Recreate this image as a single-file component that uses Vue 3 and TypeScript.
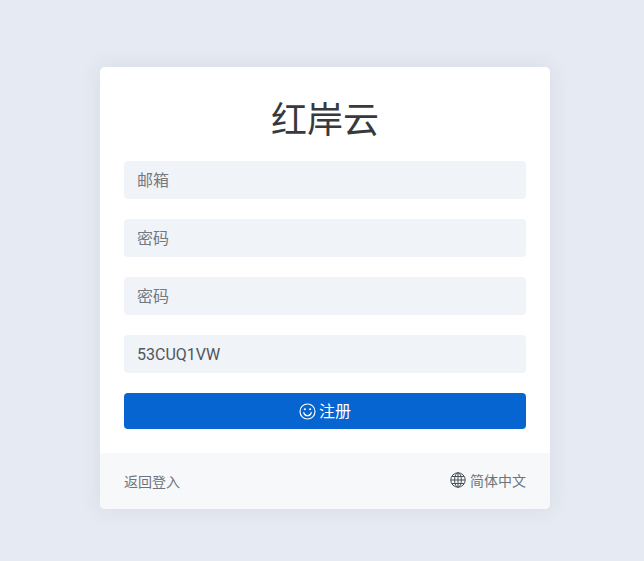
<script setup lang="ts">
const fields: { type: string; placeholder: string; value: string }[] = [
  { type: 'email', placeholder: '邮箱', value: '' },
  { type: 'password', placeholder: '密码', value: '' },
  { type: 'password', placeholder: '密码', value: '' },
  { type: 'text', placeholder: '邀请码', value: '53CUQ1VW' },
]
</script>

<template>
  <main class="page">
    <section class="card">
      <form class="body" @submit.prevent>
        <h1 class="title">红岸云</h1>
        <input
          v-for="(f, i) in fields"
          :key="i"
          class="field"
          :type="f.type"
          :placeholder="f.placeholder"
          :value="f.value"
        />
        <button class="submit" type="submit">
          <svg class="smile" viewBox="0 0 24 24" fill="none" stroke="currentColor" stroke-width="1.6" stroke-linecap="round" aria-hidden="true">
            <circle cx="12" cy="12" r="10.6" />
            <path d="M6.6 13.4c.8 3 3 4.600 5.400 4.600s4.600-1.600 5.400-4.600" />
            <circle cx="8.300" cy="8.800" r="1.500" fill="currentColor" stroke="none" />
            <circle cx="15.700" cy="8.800" r="1.500" fill="currentColor" stroke="none" />
          </svg>
          <span class="submit-label">注册</span>
        </button>
      </form>
      <footer class="foot">
        <a class="back" href="#">返回登入</a>
        <a class="lang" href="#">
          <svg class="globe" viewBox="0 0 16 16" fill="none" stroke="currentColor" stroke-width="1" aria-hidden="true">
            <circle cx="8" cy="8" r="7.200" />
            <ellipse cx="8" cy="8" rx="3.400" ry="7.200" />
            <path d="M8 .8v14.400M.8 8h14.400M1.800 4.500h12.400M1.800 11.500h12.400" />
          </svg>
          <span>简体中文</span>
        </a>
      </footer>
    </section>
  </main>
</template>

<style>
html,
body {
  margin: 0;
  background: #e6eaf2;
}
</style>

<style scoped>
.page {
  box-sizing: border-box;
  height: 561px;
  padding: 67px 0 0 6px;
  display: flex;
  justify-content: center;
  align-items: flex-start;
  font-family: Roboto, "Noto Sans CJK SC", sans-serif;
}
.card {
  width: 450px;
  background: #fff;
  border-radius: 5px;
  overflow: hidden;
  box-shadow: 0 0 20px rgba(150, 160, 180, 0.2);
}
.body {
  padding: 24px;
  display: flex;
  flex-direction: column;
}
.title {
  margin: 0 0 14px;
  height: 56px;
  padding-top: 2px;
  box-sizing: border-box;
  line-height: 56px;
  text-align: center;
  font-size: 36px;
  font-weight: 400;
  color: #373a3c;
}
.field {
  box-sizing: border-box;
  height: 38px;
  margin-bottom: 20px;
  padding: 0 13px;
  border: 0;
  border-radius: 4px;
  outline: 0;
  background: #f0f3f8;
  font: inherit;
  font-size: 16px;
  color: #4f5660;
}
.field::placeholder {
  color: #74797f;
  opacity: 1;
}
.submit {
  height: 36px;
  border: 0;
  border-radius: 4px;
  background: #0665d0;
  color: #fff;
  font: inherit;
  font-size: 16px;
  display: flex;
  align-items: center;
  justify-content: center;
  gap: 3px;
}
.submit-label {
  padding-bottom: 2px;
}
.smile {
  width: 17px;
  height: 17px;
}
.foot {
  height: 56px;
  box-sizing: border-box;
  padding: 0 24px;
  background: #f6f8fa;
  display: flex;
  justify-content: space-between;
  align-items: center;
  font-size: 14px;
}
.back,
.lang {
  color: #6c757d;
  text-decoration: none;
}
.lang {
  display: flex;
  align-items: center;
  gap: 4px;
  padding-bottom: 2px;
}
.globe {
  width: 16px;
  height: 16px;
  color: #495057;
}
</style>
